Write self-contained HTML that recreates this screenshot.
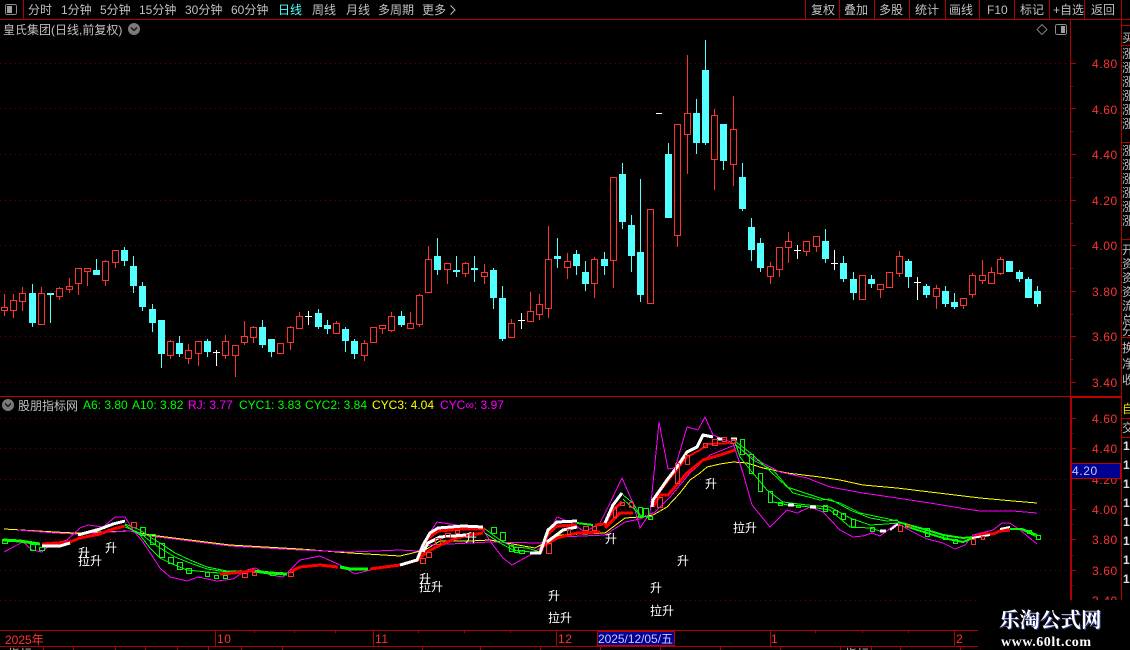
<!DOCTYPE html>
<html><head><meta charset="utf-8"><style>
html,body{margin:0;padding:0;background:#000;width:1130px;height:650px;overflow:hidden}
svg{display:block}
text{font-family:"Liberation Sans","WenQuanYi Zen Hei","Noto Sans CJK SC",sans-serif;font-size:12px}
.t text{fill:#c0c0c0}
.a text{fill:#ff3232;letter-spacing:.6px}
.w text{fill:#fff}
.g{fill:#00ff00}.m{fill:#ff00ff}.y{fill:#ffff00}
polyline,path,line,rect{shape-rendering:crispEdges}
polyline{fill:none}
</style></head><body>
<svg width="1130" height="650" viewBox="0 0 1130 650" xmlns="http://www.w3.org/2000/svg">
<rect width="1130" height="650" fill="#000"/>
<!-- grid -->
<path stroke="#7a0000" stroke-dasharray="1 4" fill="none" d="M0 63.5H1070M0 108.5H1070M0 154.5H1070M0 200.5H1070M0 245.5H1070M0 291.5H1070M0 336.5H1070M0 382.5H1070M0 418.5H1070M0 448.5H1070M0 479.5H1070M0 509.5H1070M0 539.5H1070M0 570.5H1070M0 600.5H1070"/>
<!-- frame -->
<path stroke="#b00000" fill="none" d="M0 19.5H1130M23.5 0V19M805.5 0V19M839.5 0V19M874.5 0V19M909.5 0V19M945.5 0V19M979.5 0V19M1014.5 0V19M1049.5 0V19M1084.5 0V19M1121.5 0V650M1070.5 19V600M0 630.5H978M0 646.5H978
M1121 25.5H1130M1121 45.5H1130M1121 142.5H1130M1121 239.5H1130M1121 337.5H1130M1121 418.5H1130M1121 437.5H1130
M215.5 630V646M373.5 630V646M556.5 630V646M770.5 630V646M954.5 630V646
M1070 63.5H1076M1070 108.5H1076M1070 154.5H1076M1070 200.5H1076M1070 245.5H1076M1070 291.5H1076M1070 336.5H1076M1070 382.5H1076M1070 418.5H1076M1070 448.5H1076M1070 509.5H1076M1070 539.5H1076M1070 570.5H1076
M1070 86.5H1073M1070 131.5H1073M1070 177.5H1073M1070 223.5H1073M1070 268.5H1073M1070 314.5H1073M1070 359.5H1073M1070 433.5H1073M1070 494.5H1073M1070 524.5H1073M1070 555.5H1073M1070 585.5H1073
M254.5 631V633M294.5 631V633M335.5 631V633M418.5 631V633M464.5 631V633M510.5 631V633M815.5 631V633M862.5 631V633M908.5 631V633
M43.5 646V650M73.5 646V650M115.5 646V650M145.5 646V650M177.5 646V650M208.5 646V650M241.5 646V650M282.5 646V650M422.5 646V650M480.5 646V650M540.5 646V650M600.5 646V650M660.5 646V650M720.5 646V650M780.5 646V650M840.5 646V650M871.5 646V650M900.5 646V650M960.5 646V650"/>
<rect x="0" y="396" width="1070" height="1" fill="#c00000"/>
<rect x="1070" y="396" width="51" height="2" fill="#c00000"/>
<rect x="1070" y="396" width="2" height="204" fill="#b00000"/>
<!-- toolbar -->
<g class="t">
<text x="28" y="14">分时</text><text x="61" y="14">1分钟</text><text x="100" y="14">5分钟</text><text x="139" y="14">15分钟</text><text x="185" y="14">30分钟</text><text x="231" y="14">60分钟</text>
<text x="278" y="14" style="fill:#54ffff">日线</text><text x="312" y="14">周线</text><text x="346" y="14">月线</text><text x="378" y="14">多周期</text><text x="422" y="14">更多</text>
<text x="811" y="14">复权</text><text x="844" y="14">叠加</text><text x="879" y="14">多股</text><text x="915" y="14">统计</text><text x="949" y="14">画线</text><text x="987" y="14">F10</text><text x="1020" y="14">标记</text><text x="1053" y="14">+自选</text><text x="1091" y="14">返回</text>
<text x="3" y="34">皇氏集团(日线,前复权)</text>
<text x="18" y="410">股朋指标网</text>
<text x="8" y="658">指标</text><text x="50" y="658">·</text><text x="845" y="658">指标</text>
</g>
<path d="M450.5 5.5L455 10L450.5 14.5" fill="none" stroke="#c0c0c0" style="shape-rendering:auto"/>
<rect x="5.5" y="4.5" width="11" height="10" rx="2" fill="none" stroke="#909090"/><rect x="7" y="6" width="5" height="7" fill="#a0a0a0"/>
<rect x="1055.5" y="24.5" width="11" height="10" rx="2" fill="none" stroke="#909090"/><rect x="1061" y="26" width="4" height="7" fill="#a0a0a0"/>
<path d="M1042 24.5L1047 29.5L1042 34.5L1037 29.5Z" fill="none" stroke="#808080" style="shape-rendering:auto"/>
<circle cx="134" cy="29" r="6" fill="#7a7a7a"/><path d="M131 27.5L134 30.5L137 27.5" fill="none" stroke="#111" stroke-width="1.3" style="shape-rendering:auto"/>
<circle cx="8" cy="405" r="6" fill="#7a7a7a"/><path d="M5 403.5L8 406.5L11 403.5" fill="none" stroke="#111" stroke-width="1.3" style="shape-rendering:auto"/>
<!-- legend -->
<text x="83" y="409" class="g">A6: 3.80</text><text x="132" y="409" class="g">A10: 3.82</text><text x="188" y="409" class="m">RJ: 3.77</text><text x="239" y="409" class="g">CYC1: 3.83</text><text x="305" y="409" class="g">CYC2: 3.84</text><text x="372" y="409" class="y">CYC3: 4.04</text><text x="440" y="409" class="m">CYC∞: 3.97</text>
<!-- candles red -->
<path fill="none" stroke="#ff3232" d="M4.5 294V307M4.5 310V316M1.5 307.5h6v3h-6zM13.5 294V300M13.5 310V318M10.5 300.5h6v10h-6zM22.5 287V293M22.5 301V311M19.5 293.5h6v8h-6zM38.5 293.5h6v31h-6zM41.5 287V293M59.5 287V288M59.5 296V300M56.5 288.5h6v8h-6zM69.5 278V286M69.5 289V293M66.5 286.5h6v3h-6zM78.5 283V295M75.5 268.5h6v15h-6zM87.5 271V286M84.5 268.5h6v3h-6zM105.5 260V261M105.5 280V286M102.5 261.5h6v19h-6zM115.5 262V268M112.5 250.5h6v12h-6zM170.5 340V341M170.5 355V359M167.5 341.5h6v14h-6zM188.5 344V350M188.5 358V364M185.5 350.5h6v8h-6zM198.5 353V366M195.5 341.5h6v12h-6zM225.5 335V341M225.5 355V359M222.5 341.5h6v14h-6zM235.5 355V377M232.5 345.5h6v10h-6zM244.5 321V336M244.5 342V345M241.5 336.5h6v6h-6zM253.5 326V327M253.5 337V343M250.5 327.5h6v10h-6zM277.5 343.5h6v10h-6zM290.5 326V327M290.5 342V350M287.5 327.5h6v15h-6zM299.5 312V316M299.5 328V329M296.5 316.5h6v12h-6zM336.5 321V323M336.5 333V334M333.5 323.5h6v10h-6zM364.5 340V343M364.5 355V361M361.5 343.5h6v12h-6zM373.5 342V343M370.5 327.5h6v15h-6zM382.5 328V334M379.5 325.5h6v3h-6zM391.5 312V316M391.5 330V332M388.5 316.5h6v14h-6zM410.5 312V323M407.5 323.5h6v5h-6zM419.5 294V295M419.5 324V327M416.5 295.5h6v29h-6zM428.5 246V259M425.5 259.5h6v33h-6zM447.5 269V284M444.5 263.5h6v6h-6zM465.5 262V263M465.5 273V277M462.5 263.5h6v10h-6zM484.5 264V272M484.5 276V284M481.5 272.5h6v4h-6zM511.5 319V323M508.5 323.5h6v14h-6zM530.5 292V311M527.5 311.5h6v10h-6zM539.5 294V304M539.5 314V320M536.5 304.5h6v10h-6zM548.5 226V259M548.5 308V318M545.5 259.5h6v49h-6zM567.5 253V261M567.5 267V279M564.5 261.5h6v6h-6zM594.5 257V259M594.5 283V298M591.5 259.5h6v24h-6zM613.5 260V288M610.5 177.5h6v83h-6zM647.5 209.5h6v94h-6zM677.5 235V247M674.5 124.5h6v111h-6zM687.5 55V113M687.5 134V174M684.5 113.5h6v21h-6zM714.5 109V115M714.5 159V190M711.5 115.5h6v44h-6zM733.5 96V129M733.5 164V186M730.5 129.5h6v35h-6zM770.5 262V266M770.5 276V284M767.5 266.5h6v10h-6zM779.5 269V277M776.5 247.5h6v22h-6zM788.5 232V241M788.5 247V263M785.5 241.5h6v6h-6zM806.5 251V256M803.5 241.5h6v10h-6zM816.5 246V252M813.5 236.5h6v10h-6zM859.5 275.5h6v24h-6zM880.5 289V298M877.5 284.5h6v5h-6zM886.5 272.5h6v15h-6zM899.5 251V256M899.5 273V277M896.5 256.5h6v17h-6zM936.5 285V288M936.5 296V309M933.5 288.5h6v8h-6zM963.5 305V309M960.5 298.5h6v7h-6zM972.5 273V275M972.5 294V298M969.5 275.5h6v19h-6zM982.5 260V275M982.5 280V284M979.5 275.5h6v5h-6zM991.5 267V272M988.5 272.5h6v11h-6zM1000.5 257V259M1000.5 273V275M997.5 259.5h6v14h-6z"/>
<!-- candles cyan -->
<path fill="#54ffff" stroke="#54ffff" d="M32.5 284V327M29.5 293.5h6v29h-6zM50.5 293V323M47.5 293.5h6v1h-6zM96.5 259V275M93.5 270.5h6v4h-6zM124.5 247V266M121.5 250.5h6v10h-6zM133.5 256V293M130.5 266.5h6v19h-6zM142.5 282V311M139.5 286.5h6v20h-6zM152.5 304V332M149.5 309.5h6v13h-6zM161.5 320V368M158.5 320.5h6v33h-6zM179.5 336V357M176.5 343.5h6v10h-6zM207.5 339V357M204.5 341.5h6v10h-6zM262.5 320V348M259.5 327.5h6v17h-6zM271.5 339V357M268.5 339.5h6v12h-6zM318.5 309V329M315.5 313.5h6v13h-6zM327.5 320V334M324.5 325.5h6v3h-6zM345.5 327V352M342.5 329.5h6v11h-6zM354.5 339V359M351.5 341.5h6v12h-6zM401.5 311V327M398.5 316.5h6v8h-6zM437.5 238V275M434.5 256.5h6v13h-6zM456.5 256V277M453.5 270.5h6v1h-6zM474.5 256V282M471.5 268.5h6v1h-6zM493.5 268V309M490.5 270.5h6v27h-6zM502.5 286V341M499.5 298.5h6v40h-6zM557.5 238V268M554.5 256.5h6v2h-6zM576.5 250V275M573.5 254.5h6v11h-6zM585.5 261V291M582.5 272.5h6v11h-6zM604.5 252V275M601.5 259.5h6v6h-6zM622.5 163V229M619.5 174.5h6v47h-6zM631.5 215V272M628.5 225.5h6v30h-6zM640.5 179V302M637.5 252.5h6v42h-6zM668.5 143V218M665.5 154.5h6v63h-6zM696.5 99V154M693.5 113.5h6v29h-6zM705.5 40V145M702.5 70.5h6v72h-6zM723.5 124V170M720.5 124.5h6v36h-6zM742.5 163V211M739.5 177.5h6v31h-6zM751.5 218V261M748.5 227.5h6v22h-6zM760.5 238V272M757.5 243.5h6v24h-6zM825.5 229V263M822.5 241.5h6v17h-6zM843.5 256V282M840.5 263.5h6v15h-6zM853.5 272V300M850.5 279.5h6v13h-6zM871.5 275V288M868.5 279.5h6v4h-6zM908.5 259V288M905.5 261.5h6v15h-6zM926.5 284V298M923.5 286.5h6v8h-6zM945.5 286V307M942.5 291.5h6v12h-6zM954.5 293V309M951.5 302.5h6v4h-6zM1006.5 261.5h6v10h-6zM1019.5 270V282M1016.5 272.5h6v6h-6zM1028.5 277V298M1025.5 279.5h6v18h-6zM1037.5 286V307M1034.5 291.5h6v12h-6z"/>
<path fill="none" stroke="#fff" d="M216.5 350V366M213 352.5h7M308.5 311V325M305 316.5h7M521.5 313V329M518 320.5h7M656 113.5h6M797.5 245V259M794 250.5h7M834.5 250V270M831 263.5h7M917.5 277V300M914 282.5h7"/>
<!-- lower pane: long lines -->
<polyline stroke="#ffff00" points="4,529 55,532 75,533 130,531 150,535 190,540 230,545 300,549 350,553 400,556 425,550 440,541 470,541 490,540 535,548 560,535 605,533 625,518 640,517 653,515 667,507 680,493 690,480 700,473 707,467 720,464 733,462 747,463 763,468 787,473 820,477 840,480 863,485 897,488 930,492 980,498 1013,501 1037,503"/>
<polyline stroke="#ff00ff" points="18,530 55,533 75,534 130,531 150,536 190,541 230,546 300,550 350,552 400,550 417,551 430,545 470,543 490,542 540,543 560,537 605,535 625,522 640,519 655,512 670,497 690,473 710,455 735,445 753,458 780,472 807,478 830,487 863,493 897,498 930,503 960,508 980,511 1013,511 1037,513"/>
<polyline stroke="#ff00ff" points="4,552 17,545 23,542 32,550 42,552 50,545 67,540 80,528 88,525 103,527 115,517 125,517 133,530 143,542 160,568 170,577 187,581 198,577 217,581 233,579 247,570 255,568 270,575 283,577 300,560 320,556 340,565 355,574 370,570 390,567 417,560 425,540 437,522 457,525 483,530 493,545 503,558 512,565 530,555 540,548 557,517 570,522 585,532 600,523 610,503 622,478 633,503 640,528 650,513 655,463 659,422 668,469 675,468 687,427 698,430 705,417 713,435 733,443 743,473 752,505 770,527 787,510 797,513 810,507 823,512 840,530 853,537 863,536 872,533 880,536 897,523 913,532 927,539 943,543 955,549 965,545 973,535 993,530 1002,523 1010,523 1020,530 1037,544"/>
<!-- green lines -->
<g stroke="#00ff00">
<polyline stroke-width="3" points="3,540 20,541 40,544"/>
<polyline points="125,524 140,530 150,537 160,543 175,553 190,560 207,567 227,571 245,571"/>
<polyline points="125,527 140,533 150,541 160,548 175,557 190,563 207,569 227,572 245,572"/>
<polyline points="125,525 140,535 150,548 160,558 170,563 187,570 207,572 220,573 245,572"/>
<polyline stroke-width="3" points="253,571 270,573 287,574"/>
<polyline stroke-width="3" points="340,567 350,569 368,569"/>
<polyline points="485,529 500,540 513,547 527,548 540,552"/>
<polyline points="485,533 500,543 513,550 540,553"/>
<polyline stroke-width="2" points="577,523 593,525"/>
<polyline points="623,495 633,503 640,515 650,518"/>
<polyline points="623,499 635,510 642,518"/>
<polyline points="735,442 740,457 752,472 767,490 783,502 807,505 830,507 850,518 870,525 887,524 898,523"/>
<polyline points="735,444 753,460 773,470 793,493 820,500 830,499 850,510 870,518 887,521 898,520"/>
<polyline points="735,441 753,455 787,487 820,498 840,503 860,513 898,521"/>
<polyline points="773,502 788,505 810,507 830,510 850,527 870,528 880,531"/>
<polyline stroke-width="2" points="898,522 927,530 943,535 963,538 973,537"/>
<polyline stroke-width="2" points="905,526 927,533 943,538 963,542 973,538"/>
<polyline stroke-width="2" points="1010,529 1022,529 1037,535"/>
<polyline points="1020,529 1037,537"/>
</g>
<!-- red/white fat lines: red first, white on top -->
<g stroke="#ff0000" stroke-width="3">
<polyline points="42,544 70,542 80,538 100,534 113,529 125,526"/>
<polyline points="220,574 245,572 255,570"/>
<polyline points="290,572 300,567 320,565 338,567"/>
<polyline points="370,569 400,565 418,560 427,539 438,531 463,529 485,529"/>
<polyline points="417,560 427,552 440,545 457,538 470,535 483,533"/>
<polyline points="540,548 557,538 577,533 600,532"/>
<polyline points="541,552 548,534 557,526 577,525"/>
<polyline points="595,525 605,524 613,510 622,502"/>
<polyline points="605,528 620,513 633,513"/>
<polyline points="653,507 660,495 668,495 687,473 703,460 720,455 735,450"/>
<polyline stroke-width="2" points="657,495 687,457 700,450 708,444 733,443"/>
<polyline points="972,538 983,534 993,534 1000,531 1010,530"/>
</g>
<g stroke="#fff" stroke-width="3">
<polyline points="42,546 60,546 70,543"/>
<polyline points="78,535 100,529 113,524 125,521"/>
<polyline points="400,565 417,560 423,545 430,533 438,528 463,526 483,527"/>
<polyline points="423,552 428,543 440,537 466,535"/>
<polyline points="530,553 540,553 548,530 557,522 577,521"/>
<polyline points="547,542 563,530 577,527"/>
<polyline points="605,523 613,505 622,493"/>
<polyline points="652,507 653,500 667,480 677,467 687,452 697,447 703,435 713,437"/>
<polyline stroke-width="2" points="972,538 990,535"/>
<polyline stroke-width="2" points="1000,529 1010,527"/>
<polyline stroke-width="2" points="890,530 898,524"/>
<path d="M717 439h6M731 439h6M788 505h6M810 507h6M880 531h6" fill="none"/>
</g>
<!-- small squares -->
<path fill="none" stroke="#00ff00" d="M2.5 539.5h5v4h-5zM30.5 544.5h5v6h-5zM39.5 547.5h5v3h-5zM140.5 527.5h5v8h-5zM150.5 534.5h5v10h-5zM159.5 543.5h5v14h-5zM168.5 557.5h5v6h-5zM177.5 562.5h5v7h-5zM186.5 568.5h5v5h-5zM205.5 572.5h4v4h-4zM214.5 575.5h4v3h-4zM223.5 575.5h4v3h-4zM270.5 573.5h5v2h-5zM491.5 527.5h5v6h-5zM500.5 532.5h5v8h-5zM509.5 545.5h4v6h-4zM514.5 547.5h4v5h-4zM519.5 550.5h5v3h-5zM638.5 507.5h4v10h-4zM643.5 508.5h5v8h-5zM648.5 516.5h4v3h-4zM740.5 439.5h4v15h-4zM749.5 454.5h4v19h-4zM758.5 473.5h4v18h-4zM768.5 491.5h4v11h-4zM778.5 502.5h4v3h-4zM796.5 505.5h4v2h-4zM823.5 505.5h4v6h-4zM833.5 510.5h4v4h-4zM841.5 513.5h4v6h-4zM851.5 519.5h4v8h-4zM870.5 527.5h4v4h-4zM925.5 528.5h4v8h-4zM943.5 535.5h4v4h-4zM953.5 539.5h4v4h-4zM1027.5 530.5h4v3h-4zM1036.5 535.5h4v4h-4z"/>
<path fill="none" stroke="#ff3232" d="M131.5 522.5h5v5h-5zM242.5 573.5h5v4h-5zM252.5 572.5h4v3h-4zM288.5 572.5h5v4h-5zM420.5 558.5h5v5h-5zM426.5 552.5h5v5h-5zM435.5 538.5h5v6h-5zM445.5 533.5h5v4h-5zM455.5 530.5h4v3h-4zM546.5 543.5h5v10h-5zM567.5 529.5h3v5h-3zM583.5 526.5h5v4h-5zM592.5 526.5h4v4h-4zM613.5 507.5h3v10h-3zM620.5 502.5h4v3h-4zM629.5 502.5h4v5h-4zM657.5 497.5h5v10h-5zM675.5 463.5h4v20h-4zM685.5 455.5h4v9h-4zM703.5 443.5h4v4h-4zM712.5 439.5h5v6h-5zM722.5 437.5h4v4h-4zM731.5 439.5h4v4h-4zM898.5 525.5h4v6h-4zM906.5 525.5h4v2h-4zM971.5 539.5h4v5h-4zM981.5 536.5h3v3h-3z"/>
<!-- markers -->
<g class="w">
<text x="78" y="557">升</text><text x="78" y="565">拉升</text><text x="105" y="552">升</text>
<text x="419" y="583">升</text><text x="419" y="591">拉升</text><text x="465" y="542">升</text>
<text x="548" y="600">升</text><text x="548" y="622">拉升</text><text x="605" y="543">升</text>
<text x="650" y="592">升</text><text x="650" y="615">拉升</text><text x="677" y="565">升</text><text x="705" y="488">升</text><text x="733" y="532">拉升</text>
</g>
<!-- axis labels -->
<g class="a">
<text x="1092" y="68">4.80</text><text x="1092" y="114">4.60</text><text x="1092" y="159">4.40</text><text x="1092" y="205">4.20</text><text x="1092" y="250">4.00</text><text x="1092" y="296">3.80</text><text x="1092" y="341">3.60</text><text x="1092" y="387">3.40</text>
<text x="1092" y="423">4.60</text><text x="1092" y="453">4.40</text><text x="1092" y="484">4.20</text><text x="1092" y="514">4.00</text><text x="1092" y="544">3.80</text><text x="1092" y="575">3.60</text><text x="1092" y="605">3.40</text>
<text x="5" y="644" style="letter-spacing:0">2025年</text><text x="217" y="643">10</text><text x="375" y="643">11</text><text x="558" y="643">12</text><text x="771" y="643">1</text><text x="956" y="643">2</text>
</g>
<!-- price & date boxes -->
<rect x="1071.5" y="463.5" width="49" height="15" fill="#000090" stroke="#c00000"/>
<text x="1072" y="475" fill="#c8c8ff" style="letter-spacing:.6px">4.20</text>
<rect x="597.5" y="631.5" width="77" height="14" fill="#000090" stroke="#c00000"/>
<text x="598" y="643" fill="#c8c8ff" textLength="75">2025/12/05/五</text>
<!-- sidebar -->
<svg x="1122" y="20" width="8" height="630" viewBox="1122 20 8 630">
<g class="t">
<text x="1122" y="42">买</text><text x="1122" y="58">涨</text><text x="1122" y="72">涨</text><text x="1122" y="86">涨</text><text x="1122" y="100">涨</text><text x="1122" y="114">涨</text><text x="1122" y="128">涨</text><text x="1122" y="155">涨</text><text x="1122" y="169">涨</text><text x="1122" y="183">涨</text><text x="1122" y="197">涨</text><text x="1122" y="211">涨</text><text x="1122" y="225">涨</text>
<text x="1122" y="254">开</text><text x="1122" y="268">资</text><text x="1122" y="282">资</text><text x="1122" y="296">资</text><text x="1122" y="310">流</text><text x="1122" y="324">总</text><text x="1122" y="335">分</text>
<text x="1122" y="352">换</text><text x="1122" y="368">净</text><text x="1122" y="384">收</text>
<text x="1122" y="432">交</text>
</g>
<text x="1122" y="413" fill="#e0e000">自</text>
<g>
<text x="1123" y="450" style="font-weight:bold;fill:#e0e0e0">1</text><text x="1123" y="469" style="font-weight:bold;fill:#e0e0e0">1</text><text x="1123" y="488" style="font-weight:bold;fill:#e0e0e0">1</text><text x="1123" y="507" style="font-weight:bold;fill:#e0e0e0">1</text><text x="1123" y="526" style="font-weight:bold;fill:#e0e0e0">1</text><text x="1123" y="545" style="font-weight:bold;fill:#e0e0e0">1</text><text x="1123" y="564" style="font-weight:bold;fill:#e0e0e0">1</text><text x="1123" y="583" style="font-weight:bold;fill:#e0e0e0">1</text>
</g>
</svg>
<!-- watermark -->
<rect x="978" y="600" width="152" height="50" fill="#000"/>
<text x="999" y="627" fill="#3040a0" style="font-family:'Noto Serif CJK SC','Liberation Serif',serif;font-size:20.5px;font-weight:bold" dx="1" dy="1">乐淘公式网</text>
<text x="999" y="627" fill="#fff" style="font-family:'Noto Serif CJK SC','Liberation Serif',serif;font-size:20.5px;font-weight:bold">乐淘公式网</text>
<text x="1001" y="646" fill="#fff" textLength="90" style="font-family:'Liberation Serif',serif;font-size:14px;font-weight:bold">www.60lt.com</text>
</svg>
</body></html>
